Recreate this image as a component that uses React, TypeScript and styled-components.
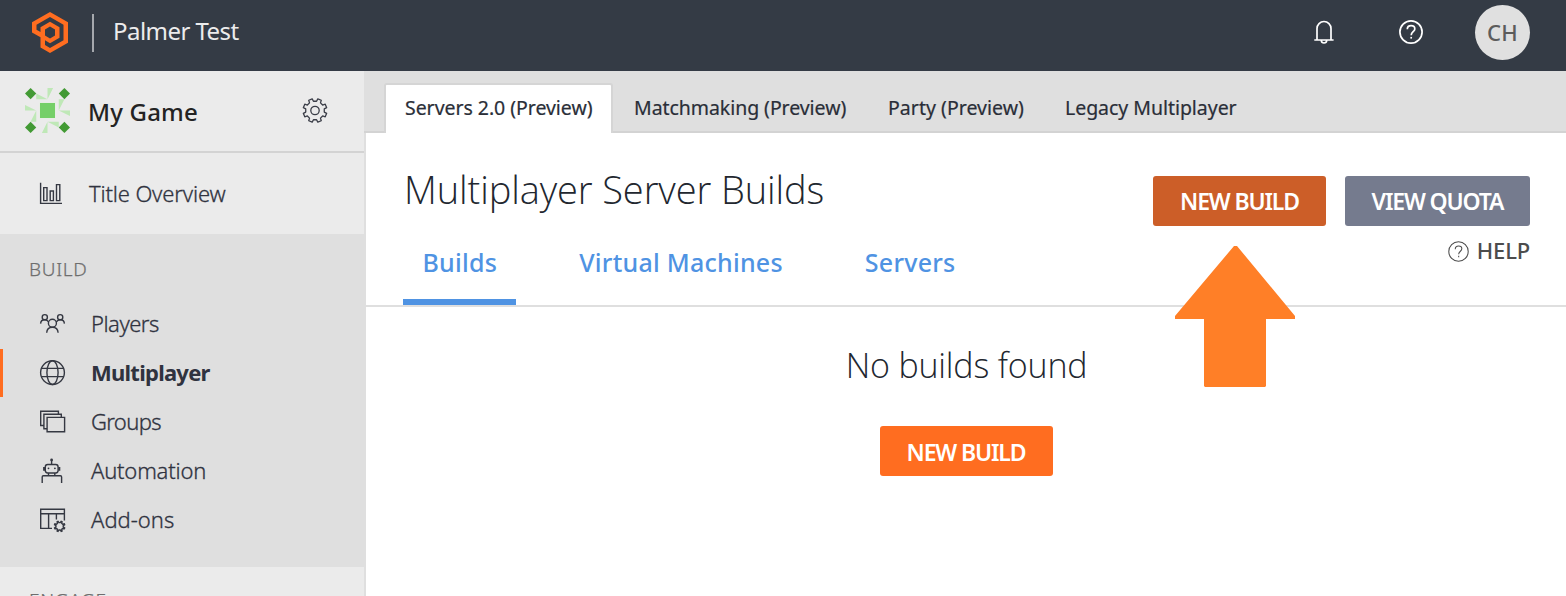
import React from "react";
import styled, { createGlobalStyle } from "styled-components";

const GlobalStyle = createGlobalStyle`
  * { box-sizing: border-box; }
  html, body { margin: 0; padding: 0; }
  body { font-family: "Noto Sans", "Open Sans", sans-serif; background: #fff; overflow: hidden; }
  svg { display: block; flex: none; }
`;

const Page = styled.div`
  position: relative;
  display: flex;
  flex-direction: column;
  width: 1566px;
  height: 596px;
  overflow: hidden;
`;

const Header = styled.header`
  display: flex;
  align-items: flex-start;
  height: 71px;
  padding: 5px 36px 0 30px;
  background: #343b45;
`;

const HeaderLogo = styled.div`
  padding: 5px 0 0;
`;

const HeaderDivider = styled.div`
  width: 2px;
  height: 38px;
  margin: 9px 19px 0 22px;
  background: #a5a8ad;
`;

const StudioName = styled.div<{ $tracking: number }>`
  flex: 1;
  padding-top: 1px;
  font-size: 24px;
  line-height: 50px;
  color: #ececec;
  letter-spacing: ${(p) => p.$tracking}px;
`;

const HeaderIcon = styled.div<{ $gap: number }>`
  padding-top: 15px;
  margin-right: ${(p) => p.$gap}px;
`;

const Avatar = styled.div`
  width: 55px;
  height: 55px;
  border-radius: 50%;
  background: #e0e0e0;
  color: #5c5c5c;
  font-size: 22px;
  font-weight: 500;
  line-height: 55px;
  text-align: center;
  letter-spacing: 0.3px;
`;

const Body = styled.div`
  display: flex;
  flex: 1;
  min-height: 0;
`;

const Sidebar = styled.aside`
  display: flex;
  flex-direction: column;
  width: 366px;
  flex: none;
  background: #ebebeb;
  border-right: 2px solid #dfdfdf;
  overflow: hidden;
`;

const GameRow = styled.div`
  display: flex;
  align-items: center;
  flex: none;
  height: 82px;
  padding: 0 36px 2px 24px;
  border-bottom: 2px solid #d3d3d3;
`;

const GameName = styled.div`
  flex: 1;
  margin-left: 16px;
  padding-top: 4px;
  font-size: 24px;
  font-weight: 500;
  line-height: 40px;
  letter-spacing: 0.2px;
  color: #232323;
`;

const NavRow = styled.a<{ $active?: boolean; $height?: number; $tracking: number; $textLeft?: number }>`
  display: flex;
  align-items: center;
  flex: none;
  height: ${(p) => p.$height ?? 48}px;
  margin-bottom: ${(p) => (p.$height ? 0 : 1)}px;
  padding-left: ${(p) => (p.$active ? 33 : 36)}px;
  border-left: ${(p) => (p.$active ? "3px solid #ff6d20" : "0")};
  font-size: 22px;
  font-weight: ${(p) => (p.$active ? 700 : 300)};
  -webkit-text-stroke: ${(p) => (p.$active ? 0 : 0.3)}px #30333f;
  letter-spacing: ${(p) => p.$tracking}px;
  color: #30333f;
  span {
    margin-left: ${(p) => p.$textLeft ?? 22}px;
    padding-bottom: 2px;
  }
`;

const NavSection = styled.section<{ $shaded?: boolean }>`
  display: flex;
  flex-direction: column;
  flex: none;
  height: 333px;
  padding-top: ${(p) => (p.$shaded ? 20 : 18)}px;
  margin-right: -2px;
  background: ${(p) => (p.$shaded ? "#dfdfdf" : "transparent")};
`;

const SectionTitle = styled.h2`
  margin: 0 0 16px;
  padding-left: 29px;
  font-size: 19px;
  font-weight: 300;
  -webkit-text-stroke: 0.25px #6e6e6e;
  line-height: 30px;
  letter-spacing: 0.7px;
  color: #6e6e6e;
`;

const Content = styled.main`
  display: flex;
  flex-direction: column;
  flex: 1;
  min-width: 0;
`;

const TabBar = styled.nav`
  display: flex;
  flex: none;
  align-items: flex-end;
  height: 62px;
  margin-left: -2px;
  padding-left: 20px;
  background: #dfdfdf;
  box-shadow: inset 0 -2px 0 #d3d3d3;
`;

const Tab = styled.a<{ $active?: boolean; $width: number; $tracking: number }>`
  height: 50px;
  width: ${(p) => p.$width}px;
  padding-left: 19px;
  border: 2px solid ${(p) => (p.$active ? "#d5d5d5" : "transparent")};
  border-bottom: 0;
  border-radius: 3px 3px 0 0;
  background: ${(p) => (p.$active ? "#fff" : "transparent")};
  font-size: 19.5px;
  -webkit-text-stroke: 0.2px #2a2e38;
  line-height: 46px;
  letter-spacing: ${(p) => p.$tracking}px;
  white-space: nowrap;
  color: #2a2e38;
`;

const BuildsHead = styled.section`
  display: flex;
  flex: none;
  justify-content: space-between;
  height: 174px;
  padding: 0 36px 0 37px;
  border-bottom: 2px solid #dfdfdf;
`;

const HeadLeft = styled.div`
  display: flex;
  flex-direction: column;
  justify-content: space-between;
`;

const PageTitle = styled.h1`
  margin: 30px 0 0;
  padding-left: 1px;
  font-family: "Open Sans", "Noto Sans", sans-serif;
  font-size: 38px;
  font-weight: 300;
  line-height: 52px;
  letter-spacing: -0.1px;
  color: #22272f;
`;

const SubTabs = styled.nav`
  display: flex;
`;

const SubTab = styled.a<{ $active?: boolean; $gap: number }>`
  height: 64px;
  margin-right: ${(p) => p.$gap}px;
  padding: 0 19px 0 19.5px;
  border-bottom: 6px solid ${(p) => (p.$active ? "#4f93e3" : "transparent")};
  font-size: 25px;
  font-weight: 500;
  line-height: 42px;
  letter-spacing: 0.25px;
  color: #4f93e3;
`;

const HeadRight = styled.div`
  display: flex;
  flex-direction: column;
  align-items: flex-end;
  padding-top: 43px;
`;

const ButtonRow = styled.div`
  display: flex;
  gap: 19px;
`;

const Button = styled.button<{ $tone: "primary" | "pressed" | "neutral"; $width: number }>`
  width: ${(p) => p.$width}px;
  height: 50px;
  padding: ${(p) => (p.$tone === "primary" ? "1px 0 0" : "0 0 1px")};
  border: 0;
  border-radius: 3px;
  background: ${(p) => ({ primary: "#ff6d20", pressed: "#cc5e28", neutral: "#757b8e" })[p.$tone]};
  color: #fff;
  font-family: inherit;
  font-size: 23px;
  font-weight: 600;
  letter-spacing: -1.15px;
`;

const HelpLink = styled.a`
  display: flex;
  align-items: center;
  gap: 8px;
  margin-top: 10px;
  font-size: 22px;
  font-weight: 500;
  line-height: 30px;
  letter-spacing: -0.15px;
  color: #4c4c4c;
  span { padding-bottom: 2px; line-height: 28px; }
`;

const EmptyState = styled.section`
  display: flex;
  flex-direction: column;
  align-items: center;
  padding-top: 33px;
`;

const EmptyText = styled.p`
  margin: 0 0 36px;
  padding-left: 1px;
  font-family: "Open Sans", "Noto Sans", sans-serif;
  font-size: 34px;
  font-weight: 300;
  line-height: 50px;
  letter-spacing: -0.18px;
  color: #22272f;
`;

const Pointer = styled.svg`
  position: absolute;
  left: 1175px;
  top: 246px;
`;

const gearPath = (cx: number, cy: number, outer: number, root: number, teeth: number, top: number, base: number) => {
  const point = (deg: number, r: number) => {
    const a = ((deg - 90) * Math.PI) / 180;
    return `${(cx + r * Math.cos(a)).toFixed(2)} ${(cy + r * Math.sin(a)).toFixed(2)}`;
  };
  const step = 360 / teeth;
  const points: string[] = [];
  for (let i = 0; i < teeth; i++) {
    const mid = step * (i + 0.5);
    points.push(point(mid - base, root), point(mid - top, outer), point(mid + top, outer), point(mid + base, root));
  }
  return `M${points.join("L")}Z`;
};

const LogoMark = () => (
  <svg width="40" height="45" viewBox="30 10 40 45">
    <path
      fill="#ff6d20"
      fillRule="evenodd"
      d="M50 12 68 22.3V42.7L50 53 40.5 47.6V37.3L32 32.4V22.3ZM50 17 36.5 24.7V29.8L40.5 32V27.3L50 21.8 59.5 27.3V37.8L50 43.2 45 40.3V45.1L50 48 63.5 40.2V24.8ZM50 26.6 45 29.5V35.5L50 38.4 55 35.5V29.5Z"
    />
  </svg>
);

const GameBadge = () => (
  <svg width="48" height="46" viewBox="-23.5 -23.5 48 46">
    {[0, 90, 180, 270].map((turn) => (
      <g key={turn} transform={`rotate(${turn})`}>
        <path fill="#bfe8b7" d="M0-22.5H5.6L0-11.25ZM-11.25-16.9 0-11.25H-11.25Z" />
        <path fill="#429a34" d="M-16.9-22.5-11.25-16.9-16.9-11.25-22.5-16.9Z" />
      </g>
    ))}
    <rect x="-8" y="-8" width="16" height="16" fill="#e3f1e0" />
    <rect x="-7.5" y="-7.5" width="15" height="15" fill="#75cf68" />
  </svg>
);

const GearIcon = () => (
  <svg width="26" height="26" viewBox="0 -0.5 26 26" fill="none" stroke="#3a3d47" strokeWidth="1.3" strokeLinejoin="round">
    <path d={gearPath(13, 13, 12, 9.4, 8, 9, 13)} />
    <circle cx="13" cy="13" r="4.2" />
  </svg>
);

const BellIcon = () => (
  <svg width="20" height="25" viewBox="1314 20 20 25" fill="none" stroke="#fff" strokeWidth="1.7">
    <path d="M1314.3 40H1333.6M1317 40V28.5A7 7 0 0 1 1331 28.5V40M1321.3 40.5C1321.5 43.8 1326.5 43.8 1326.7 40.5" />
  </svg>
);

const QuestionIcon = ({ size, color, weight }: { size: number; color: string; weight: number }) => (
  <svg width={size} height={size} viewBox="0 0 24 24" fill="none" stroke={color} strokeWidth={weight}>
    <circle cx="12" cy="12" r="11.1" />
    <path d="M8.3 9.3C8.3 7 9.9 5.7 12.1 5.7C14.3 5.7 15.8 7 15.8 8.9C15.8 11.6 12.2 11.9 12.2 15.2" />
    <path d="M12.2 16.9V18.6" />
  </svg>
);

const NavSvg = styled.svg.attrs({ fill: "none", stroke: "#353842", strokeWidth: 1.4, width: 33, height: 30 })``;

const ChartIcon = () => (
  <NavSvg viewBox="36 179 33 30">
    <path d="M40.6 182.7V203.4H62M43.7 187.6H47V200.6H43.7ZM50.2 191H53.4V200.6H50.2ZM56.5 184.6H59.8V200.6H56.5Z" />
  </NavSvg>
);

const PlayersIcon = () => (
  <NavSvg viewBox="36 309 33 30">
    <circle cx="52.4" cy="323.3" r="4" />
    <circle cx="44.8" cy="317.2" r="2.6" />
    <circle cx="60.2" cy="317.2" r="2.6" />
    <path d="M40.6 323.6C40.8 320.7 42.5 319.8 44.8 319.8C46.6 319.8 47.8 320.5 48.6 322M64.4 323.6C64.2 320.7 62.5 319.8 60.2 319.8C58.4 319.8 57.2 320.5 56.2 322M46.7 332.8C46.9 329 49.3 327.3 52.4 327.3C55.5 327.3 57.9 329 58.1 332.8" />
  </NavSvg>
);

const GlobeIcon = () => (
  <NavSvg viewBox="36 358 33 30">
    <circle cx="52.5" cy="372.6" r="11.9" />
    <ellipse cx="52.5" cy="372.6" rx="5.6" ry="11.9" />
    <path d="M41.5 368.4H63.5M41.5 376.6H63.5" />
  </NavSvg>
);

const GroupsIcon = () => (
  <NavSvg viewBox="36 407 33 30">
    <path d="M47.1 417.4H64.6V431.8H47.1ZM61.3 417V414.3H43.9V428.7H46.8M58.4 414V411.2H40.7V425.5H43.8" />
  </NavSvg>
);

const RobotIcon = () => (
  <NavSvg viewBox="36 456 33 30">
    <path d="M51.6 460V464.4M42.2 483V476.9Q42.2 475.7 43.4 475.7H60.4Q61.6 475.7 61.6 476.9V483M48.5 473V475.5M54.8 473V475.5" />
    <rect x="45.3" y="464.5" width="12.8" height="8.5" rx="2.4" />
    <path strokeWidth="2" d="M44.1 467V470.8M59.3 467V470.8" />
    <circle cx="51.6" cy="460" r="1.4" fill="#353842" stroke="none" />
    <circle cx="48.5" cy="468.3" r="0.9" fill="#353842" stroke="none" />
    <circle cx="54.9" cy="468.3" r="0.9" fill="#353842" stroke="none" />
  </NavSvg>
);

const AddonsIcon = () => (
  <NavSvg viewBox="36 505 33 30">
    <path d="M52 528.4H40.7V509.3H64.4V520.5M40.7 513.8H64.4M48.6 513.8V528.4M56.4 513.8V519.5" />
    <path d={gearPath(59.6, 526.3, 5.3, 3.7, 8, 5, 13)} />
  </NavSvg>
);

const items = [
  { label: "Players", icon: <PlayersIcon />, tracking: -0.5 },
  { label: "Multiplayer", icon: <GlobeIcon />, tracking: -0.75, active: true },
  { label: "Groups", icon: <GroupsIcon />, tracking: -0.65 },
  { label: "Automation", icon: <RobotIcon />, tracking: -0.2 },
  { label: "Add-ons", icon: <AddonsIcon />, tracking: 0 },
];

export default function App() {
  return (
    <Page>
      <GlobalStyle />
      <Header>
        <HeaderLogo><LogoMark /></HeaderLogo>
        <HeaderDivider />
        <StudioName $tracking={-0.55}>Palmer Test</StudioName>
        <HeaderIcon $gap={65}><BellIcon /></HeaderIcon>
        <HeaderIcon $gap={52}><QuestionIcon size={24} color="#fff" weight={1.7} /></HeaderIcon>
        <Avatar>CH</Avatar>
      </Header>
      <Body>
        <Sidebar>
          <GameRow>
            <GameBadge />
            <GameName>My Game</GameName>
            <GearIcon />
          </GameRow>
          <NavRow $height={81} $tracking={-0.15} $textLeft={20}>
            <ChartIcon />
            <span>Title Overview</span>
          </NavRow>
          <NavSection $shaded>
            <SectionTitle>BUILD</SectionTitle>
            {items.map((item) => (
              <NavRow key={item.label} $active={item.active} $tracking={item.tracking}>
                {item.icon}
                <span>{item.label}</span>
              </NavRow>
            ))}
          </NavSection>
          <NavSection>
            <SectionTitle>ENGAGE</SectionTitle>
          </NavSection>
        </Sidebar>
        <Content>
          <TabBar>
            <Tab $active $width={229} $tracking={-0.04}>Servers 2.0 (Preview)</Tab>
            <Tab $width={254} $tracking={-0.06}>Matchmaking (Preview)</Tab>
            <Tab $width={177} $tracking={0.03}>Party (Preview)</Tab>
            <Tab $width={220} $tracking={-0.04}>Legacy Multiplayer</Tab>
          </TabBar>
          <BuildsHead>
            <HeadLeft>
              <PageTitle>Multiplayer Server Builds</PageTitle>
              <SubTabs>
                <SubTab $active $gap={43.5}>Builds</SubTab>
                <SubTab $gap={43.5}>Virtual Machines</SubTab>
                <SubTab $gap={0}>Servers</SubTab>
              </SubTabs>
            </HeadLeft>
            <HeadRight>
              <ButtonRow>
                <Button $tone="pressed" $width={173}>NEW BUILD</Button>
                <Button $tone="neutral" $width={185}>VIEW QUOTA</Button>
              </ButtonRow>
              <HelpLink>
                <QuestionIcon size={21} color="#4c4c4c" weight={1.2} />
                <span>HELP</span>
              </HelpLink>
            </HeadRight>
          </BuildsHead>
          <EmptyState>
            <EmptyText>No builds found</EmptyText>
            <Button $tone="primary" $width={173}>NEW BUILD</Button>
          </EmptyState>
        </Content>
      </Body>
      <Pointer width="120" height="141" viewBox="0 0 120 141">
        <path fill="#ff7f27" d="M59 0H62L120 70V73H91V140L90 141H30L29 140V73H0V70Z" />
      </Pointer>
    </Page>
  );
}
